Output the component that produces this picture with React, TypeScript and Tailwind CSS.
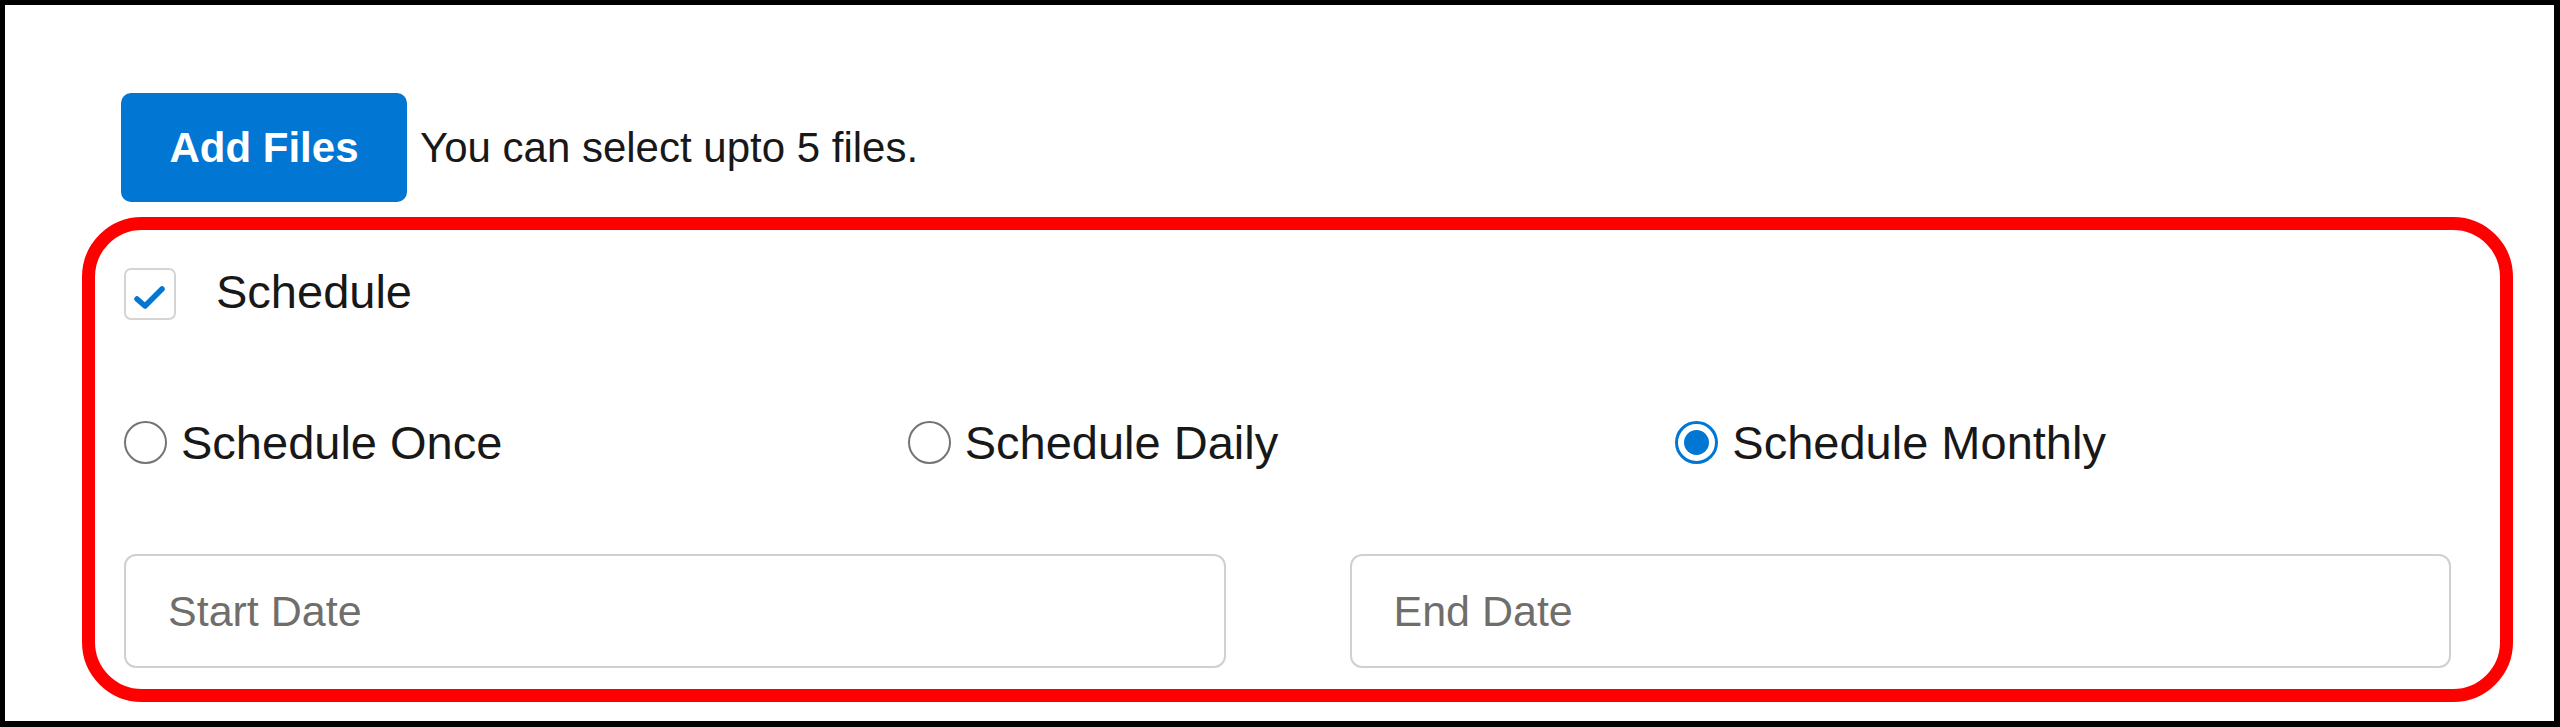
import React, { useState } from "react";

type Freq = "once" | "daily" | "monthly";

const options: { key: Freq; label: string; cls: string }[] = [
  { key: "once", label: "Schedule Once", cls: "" },
  { key: "daily", label: "Schedule Daily", cls: "ml-[8px]" },
  { key: "monthly", label: "Schedule Monthly", cls: "" },
];

const Radio: React.FC<{ checked: boolean; label: string; className: string; onClick: () => void }> = ({
  checked,
  label,
  className,
  onClick,
}) => (
  <button type="button" onClick={onClick} className={`flex items-center gap-[14px] ${className}`}>
    {checked ? (
      <span className="flex h-[43px] w-[43px] items-center justify-center rounded-full border-[3px] border-[#0176d3] bg-white">
        <span className="h-[25px] w-[25px] rounded-full bg-[#0176d3]" />
      </span>
    ) : (
      <span className="h-[43px] w-[43px] rounded-full border-2 border-[#747474] bg-white" />
    )}
    <span className="text-[47px] leading-none text-[#181818]">{label}</span>
  </button>
);

const App: React.FC = () => {
  const [scheduled, setScheduled] = useState(true);
  const [freq, setFreq] = useState<Freq>("monthly");

  return (
    <div
      className="h-[727px] w-[2560px] border-[5px] border-r-[6px] border-b-[6px] border-black bg-white"
      style={{ fontFamily: '"Liberation Sans", Arial, sans-serif' }}
    >
      {/* file picker */}
      <div className="flex items-center pl-[116px] pt-[88px]">
        <button
          type="button"
          className="h-[109px] w-[286px] rounded-[10px] bg-[#0176d3] text-[42px] font-semibold text-white"
        >
          Add Files
        </button>
        <span className="ml-[13px] text-[42px] text-[#181818]">You can select upto 5 files.</span>
      </div>

      {/* schedule section */}
      <div className="ml-[77px] mt-[15px] h-[485px] w-[2431px] rounded-[60px] border-[13px] border-[#ff0000] pl-[29px] pr-[49px] pt-[38px]">
        <div className="flex items-center gap-[40px]">
          <button
            type="button"
            onClick={() => setScheduled(!scheduled)}
            className="flex h-[52px] w-[52px] items-center justify-center rounded-[7px] border-2 border-[#d4d4d4] bg-white"
          >
            {scheduled && (
              <svg width="32" height="26" viewBox="0 0 32 26" className="mt-[8px]">
                <path
                  d="M3 14 L11 21 L28 4"
                  fill="none"
                  stroke="#0176d3"
                  strokeWidth="5.5"
                  strokeLinecap="round"
                  strokeLinejoin="round"
                />
              </svg>
            )}
          </button>
          <span className="-mt-[6px] text-[47px] leading-none text-[#181818]">Schedule</span>
        </div>

        <div className="mt-[99px] grid grid-cols-3">
          {options.map((o) => (
            <Radio
              key={o.key}
              checked={freq === o.key}
              label={o.label}
              className={o.cls}
              onClick={() => setFreq(o.key)}
            />
          ))}
        </div>

        <div className="mt-[88px] grid grid-cols-2 gap-[124px]">
          <input
            placeholder="Start Date"
            className="h-[114px] rounded-[12px] border-2 border-[#d0d0d0] px-[42px] text-[43px] text-[#181818] placeholder:text-[#706e6b] outline-none"
          />
          <input
            placeholder="End Date"
            className="h-[114px] rounded-[12px] border-2 border-[#d0d0d0] px-[42px] text-[43px] text-[#181818] placeholder:text-[#706e6b] outline-none"
          />
        </div>
      </div>
    </div>
  );
};

export default App;
